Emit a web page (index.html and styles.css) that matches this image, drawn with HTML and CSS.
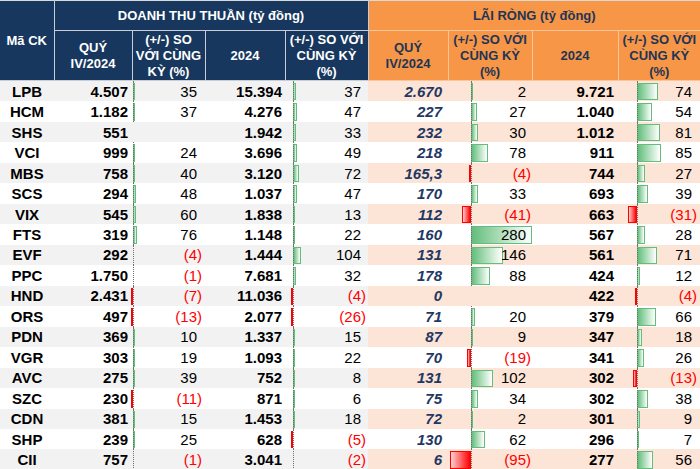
FILE: index.html
```html
<!DOCTYPE html>
<html lang="vi">
<head>
<meta charset="utf-8">
<link rel="stylesheet" href="styles.css">
</head>
<body>
<table class="tbl">
<colgroup>
<col class="w0"><col class="w1"><col class="w2"><col class="w3"><col class="w4"><col class="w5"><col class="w6"><col class="w7"><col class="w8">
</colgroup>
<thead>
<tr class="h1">
<th rowspan="2" class="hl code-h">Mã CK</th>
<th colspan="4" class="hl">DOANH THU THUẦN (tỷ đồng)</th>
<th colspan="4" class="hr">LÃI RÒNG (tỷ đồng)</th>
</tr>
<tr class="h2">
<th class="hl">QUÝ<br>IV/2024</th>
<th class="hl">(+/-) SO VỚI CÙNG KỲ (%)</th>
<th class="hl">2024</th>
<th class="hl">(+/-) SO VỚI CÙNG KỲ (%)</th>
<th class="hr">QUÝ<br>IV/2024</th>
<th class="hr">(+/-) SO VỚI CÙNG KỲ (%)</th>
<th class="hr">2024</th>
<th class="hr">(+/-) SO VỚI CÙNG KỲ (%)</th>
</tr>
</thead>
<tbody id="body">
</tbody>
</table>
<script src="app.js"></script>
</body>
</html>
```
FILE: app.js
```js
var rows = [
["LPB","4.507",35,"15.394",37,"2.670",2,"9.721",74],
["HCM","1.182",37,"4.276",47,"227",27,"1.040",54],
["SHS","551",null,"1.942",33,"232",30,"1.012",81],
["VCI","999",24,"3.696",49,"218",78,"911",85],
["MBS","758",40,"3.120",72,"165,3",-4,"744",27],
["SCS","294",48,"1.037",47,"170",33,"693",39],
["VIX","545",60,"1.838",13,"112",-41,"663",-31],
["FTS","319",76,"1.148",22,"160",280,"567",28],
["EVF","292",-4,"1.444",104,"131",146,"561",71],
["PPC","1.750",-1,"7.681",32,"178",88,"424",12],
["HND","2.431",-7,"11.036",-4,"0",null,"422",-4],
["ORS","497",-13,"2.077",-26,"71",20,"379",66],
["PDN","369",10,"1.337",15,"87",9,"347",18],
["VGR","303",19,"1.093",22,"70",-19,"341",26],
["AVC","275",39,"752",8,"131",102,"302",-13],
["SZC","230",-11,"871",6,"75",34,"302",38],
["CDN","381",15,"1.453",18,"72",2,"301",9],
["SHP","239",25,"628",-5,"130",62,"296",7],
["CII","757",-1,"3.041",-2,"6",-95,"277",56]
];
var scales = {2:0.055, 4:0.08, 6:0.218, 8:0.285};
var body = document.getElementById("body");
rows.forEach(function(r){
  var tr = document.createElement("tr");
  r.forEach(function(v, i){
    var td = document.createElement("td");
    td.className = "c" + i;
    if (scales[i] !== undefined) {
      if (v !== null) {
        td.className += " ax";
        var w = Math.abs(v) * scales[i];
        if (w > 0.3) {
          var b = document.createElement("i");
          b.className = v < 0 ? "bar neg" : "bar pos";
          b.style.width = Math.max(w, 1).toFixed(1) + "px";
          td.appendChild(b);
        }
        var s = document.createElement("span");
        s.className = v < 0 ? "v n" : "v p";
        s.textContent = v < 0 ? "(" + (-v) + ")" : String(v);
        td.appendChild(s);
      }
    } else {
      var s2 = document.createElement("span");
      s2.className = "v";
      s2.textContent = v;
      td.appendChild(s2);
    }
    tr.appendChild(td);
  });
  body.appendChild(tr);
});
```
FILE: styles.css
```css
html, body {
  margin: 0;
  padding: 0;
  background: #ffffff;
}
body {
  font-family: "Liberation Sans", Arial, sans-serif;
  width: 700px;
  height: 469px;
  overflow: hidden;
}
.tbl {
  width: 700px;
  table-layout: fixed;
  border-collapse: collapse;
  border-spacing: 0;
}
.w0 { width: 54px; }
.w1 { width: 78px; }
.w2 { width: 73px; }
.w3 { width: 80px; }
.w4 { width: 83px; }
.w5 { width: 80px; }
.w6 { width: 84px; }
.w7 { width: 86px; }
.w8 { width: 82px; }

th {
  font-size: 13px;
  font-weight: bold;
  line-height: 16px;
  text-align: center;
  vertical-align: middle;
  padding: 0 2px;
}
.hl {
  background: #17375e;
  color: #ffffff;
  border: 1px solid #c9ced6;
}
.hr {
  background: #f79646;
  color: #1d3557;
  border: 1px solid #fbc49a;
}
.h1 th { height: 29px; border-top: 1px solid #d9d9d9; }
.h1 .code-h { border-left: none; }
.h2 th { height: 49px; }
.h1 .hr:last-child, .h2 .hr:last-child { border-right: none; }

td {
  height: 20.47px;
  padding: 0;
  font-size: 15px;
  line-height: 17px;
  color: #000000;
  text-align: right;
  white-space: nowrap;
  position: relative;
  vertical-align: middle;
}
tbody tr:nth-child(odd) .c0,
tbody tr:nth-child(odd) .c1,
tbody tr:nth-child(odd) .c2,
tbody tr:nth-child(odd) .c3,
tbody tr:nth-child(odd) .c4 { background: #f2f2f2; }
tbody tr:nth-child(odd) .c5,
tbody tr:nth-child(odd) .c6,
tbody tr:nth-child(odd) .c7,
tbody tr:nth-child(odd) .c8 { background: #fce4d6; }

.v { position: relative; z-index: 1; }
.c0 { text-align: center; font-weight: bold; }
.c1 { font-weight: bold; padding-right: 4px; }
.c2 { padding-right: 3px; --axis: 1px; }
.c3 { font-weight: bold; padding-right: 3px; }
.c4 { padding-right: 2px; --axis: 8px; }
.c5 { font-weight: bold; font-style: italic; color: #1f3864; padding-right: 6px; }
.c6 { padding-right: 1px; --axis: 23px; }
.c7 { font-weight: bold; padding-right: 4px; }
.c8 { padding-right: 3px; --axis: 19px; }

.p { padding-right: 5px; }
.n { color: #ff0000; }

.ax::before {
  content: "";
  position: absolute;
  top: 0;
  bottom: 0;
  left: var(--axis);
  border-left: 1px dotted #6f6f6f;
  z-index: 1;
}
.bar {
  position: absolute;
  top: 2px;
  bottom: 1px;
  box-sizing: border-box;
  z-index: 0;
}
.bar.pos {
  left: var(--axis);
  background: linear-gradient(to right, #63be7b, #ffffff);
  border: 1px solid #63be7b;
}
.bar.neg {
  right: calc(100% - var(--axis));
  background: linear-gradient(to right, #ffd0d0, #ff0000);
  border: 1px solid #ff0000;
}
```
